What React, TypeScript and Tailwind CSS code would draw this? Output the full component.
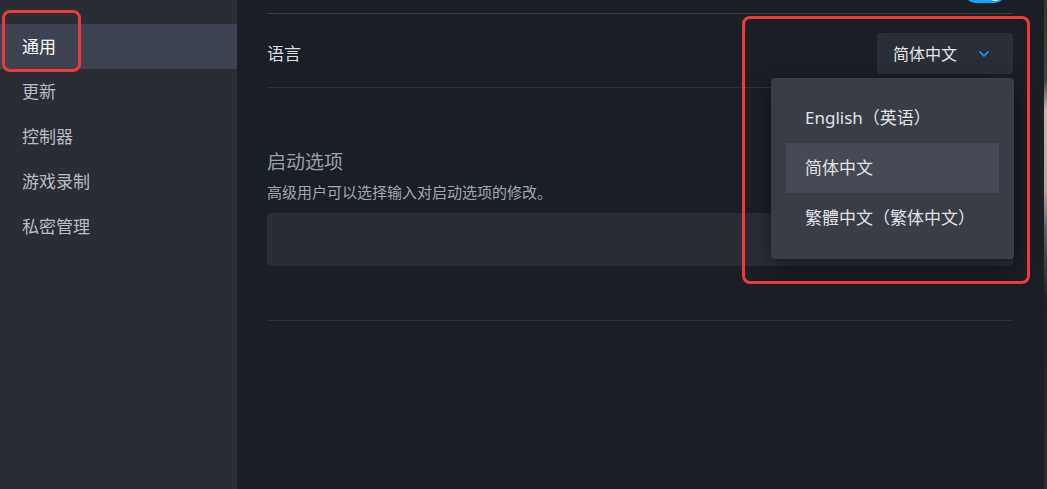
import { ChevronDown } from "lucide-react";

const navItems = ["通用", "更新", "控制器", "游戏录制", "私密管理"];
const languages = ["English（英语）", "简体中文", "繁體中文（繁体中文）"];

export default function App() {
  return (
    <div className="relative flex h-[489px] w-[1047px] overflow-hidden font-['Noto_Sans','Noto_Sans_CJK_SC',sans-serif]">
      {/* Sidebar */}
      <aside className="w-[237px] shrink-0 bg-[#2a2d33] pt-[24px]">
        {navItems.map((item, i) => (
          <div
            key={item}
            className={`flex h-[45px] items-center pl-[22px] text-[17px] ${
              i === 0 ? "bg-[#3d4350] text-white" : "text-[#b9bdc3]"
            }`}
          >
            {item}
          </div>
        ))}
      </aside>

      {/* Main */}
      <main className="relative flex-1 bg-[#1a1e25] pl-[30px] pr-[31px]">
        {/* previous row, cut off */}
        <div className="flex h-[14px] items-start justify-end overflow-hidden border-b border-[#373c45] pr-[8px]">
          <div className="-mt-[17px] flex h-[20px] w-[40px] items-center justify-end rounded-full bg-[#1a9fff] pr-[2px]">
            <div className="h-[16px] w-[16px] rounded-full bg-white" />
          </div>
        </div>

        {/* Language row */}
        <div className="flex items-center justify-between border-b border-[#2e333b] pb-[13px] pt-[19px]">
          <span className="text-[17px] text-[#dcdfe3]">语言</span>
          <button className="flex h-[41px] w-[136px] items-center justify-between rounded-[4px] bg-[#2a2e36] pl-[16px] pr-[21px] text-[16px] text-[#e4e6e9]">
            简体中文
            <ChevronDown size={16} strokeWidth={2.5} className="text-[#1a9fff]" />
          </button>
        </div>

        {/* Launch options */}
        <div className="border-b border-[#2e333b] pb-[54px] pt-[62px]">
          <div className="text-[19px] leading-[24px] text-[#9aa0a8]">启动选项</div>
          <div className="mt-[9px] text-[15px] leading-[18px] text-[#a3a8af]">
            高级用户可以选择输入对启动选项的修改。
          </div>
          <div className="mt-[12px] h-[53px] rounded-[4px] bg-[#2a2d35]" />
        </div>

        {/* Dropdown menu */}
        <div className="absolute left-[534px] top-[78px] w-[243px] rounded-[4px] bg-[#393d46] px-[15px] pb-[16px] pt-[15px] shadow-[0_8px_24px_rgba(0,0,0,0.45)]">
          {languages.map((lang, i) => (
            <div
              key={lang}
              className={`flex h-[50px] items-center pl-[19px] text-[17px] text-[#e0e3e7] ${
                i === 1 ? "bg-[#454953]" : ""
              }`}
            >
              {lang}
            </div>
          ))}
        </div>
      </main>

      {/* desktop peeking through at right edge */}
      <div className="w-[3px] shrink-0 bg-[linear-gradient(to_bottom,#2f3a2c_0px,#3d4a35_80px,#c9b999_110px,#b9ab8c_190px,#55645a_230px,#1c2026_300px,#2a2e33_489px)]" />

      {/* Annotation boxes */}
      <div className="pointer-events-none absolute left-[2px] top-[10px] h-[62px] w-[79px] rounded-[8px] border-[3px] border-[#ef3a3d]" />
      <div className="pointer-events-none absolute left-[742px] top-[16px] h-[268px] w-[288px] rounded-[8px] border-[3px] border-[#ef3a3d]" />
    </div>
  );
}
